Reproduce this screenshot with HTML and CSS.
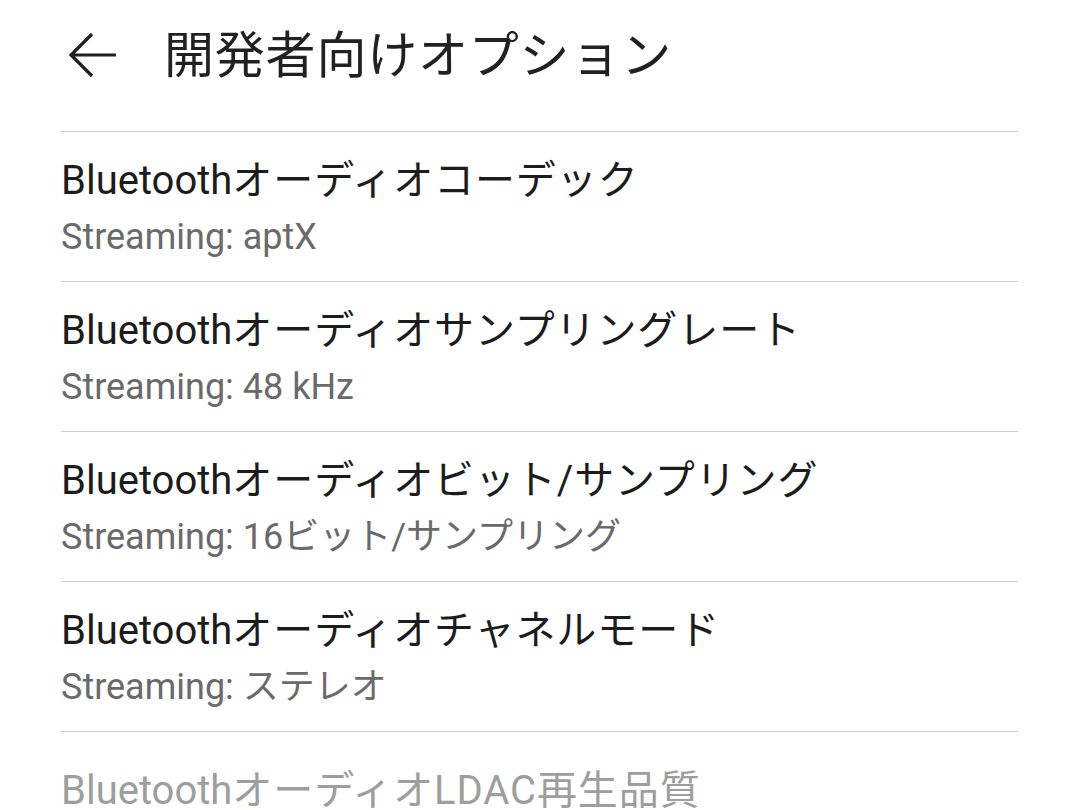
FILE: index.html
```html
<!DOCTYPE html>
<html lang="ja">
<head>
<meta charset="utf-8">
<link rel="stylesheet" href="styles.css">
</head>
<body>
<div class="page">
  <header class="appbar">
    <span class="back">
      <svg width="48" height="48" viewBox="0 0 48 48">
        <path d="M24 2 L3 23 L24 44 M3 23 L48 23" fill="none" stroke="#212121" stroke-width="3.2" stroke-linejoin="miter"/>
      </svg>
    </span>
    <h1 class="appbar-title">開発者向けオプション</h1>
  </header>
  <ul class="list">
    <li class="item">
      <div class="item-title">Bluetooth<span class="ja">オーディオコーデック</span></div>
      <div class="item-sub">Streaming: aptX</div>
    </li>
    <li class="item">
      <div class="item-title">Bluetooth<span class="ja">オーディオサンプリングレート</span></div>
      <div class="item-sub">Streaming: 48 kHz</div>
    </li>
    <li class="item">
      <div class="item-title">Bluetooth<span class="ja">オーディオビット/サンプリング</span></div>
      <div class="item-sub">Streaming: 16ビット/サンプリング</div>
    </li>
    <li class="item">
      <div class="item-title">Bluetooth<span class="ja">オーディオチャネルモード</span></div>
      <div class="item-sub">Streaming: ステレオ</div>
    </li>
    <li class="item item-disabled">
      <div class="item-title">Bluetooth<span class="ja">オーディオLDAC再生品質</span></div>
    </li>
  </ul>
</div>
</body>
</html>
```
FILE: styles.css
```css
html, body {
  margin: 0;
  padding: 0;
  background: #ffffff;
  overflow: hidden;
}
body {
  font-family: Roboto, "Noto Sans CJK JP", sans-serif;
  color: #212121;
  width: 1079px;
  height: 810px;
}
.page {
  padding: 0 61px;
}
.appbar {
  height: 131px;
  display: flex;
  align-items: center;
  box-sizing: border-box;
  padding-bottom: 20px;
}
.back {
  width: 48px;
  height: 48px;
  margin-left: 7px;
  display: flex;
  align-items: center;
}
.back svg {
  display: block;
}
.appbar-title {
  margin: 0 0 0 48px;
  font-size: 50px;
  font-weight: 400;
  line-height: 60px;
  letter-spacing: 0.8px;
  color: #212121;
}
.list {
  list-style: none;
  margin: 0;
  padding: 0;
}
.item {
  border-top: 1px solid #cfcfcf;
  height: 150px;
  box-sizing: border-box;
  padding-top: 25px;
}
.item-title {
  font-size: 40px;
  line-height: 48px;
  height: 48px;
  color: #1c1c1c;
  white-space: nowrap;
}
.item-title .ja {
  letter-spacing: 0.9px;
}
.item-sub {
  margin-top: 10px;
  font-size: 36px;
  line-height: 44px;
  height: 44px;
  color: #6a6a6a;
  white-space: nowrap;
}
.item-disabled {
  padding-top: 35px;
}
.item-disabled .item-title {
  color: #9e9e9e;
}
```
